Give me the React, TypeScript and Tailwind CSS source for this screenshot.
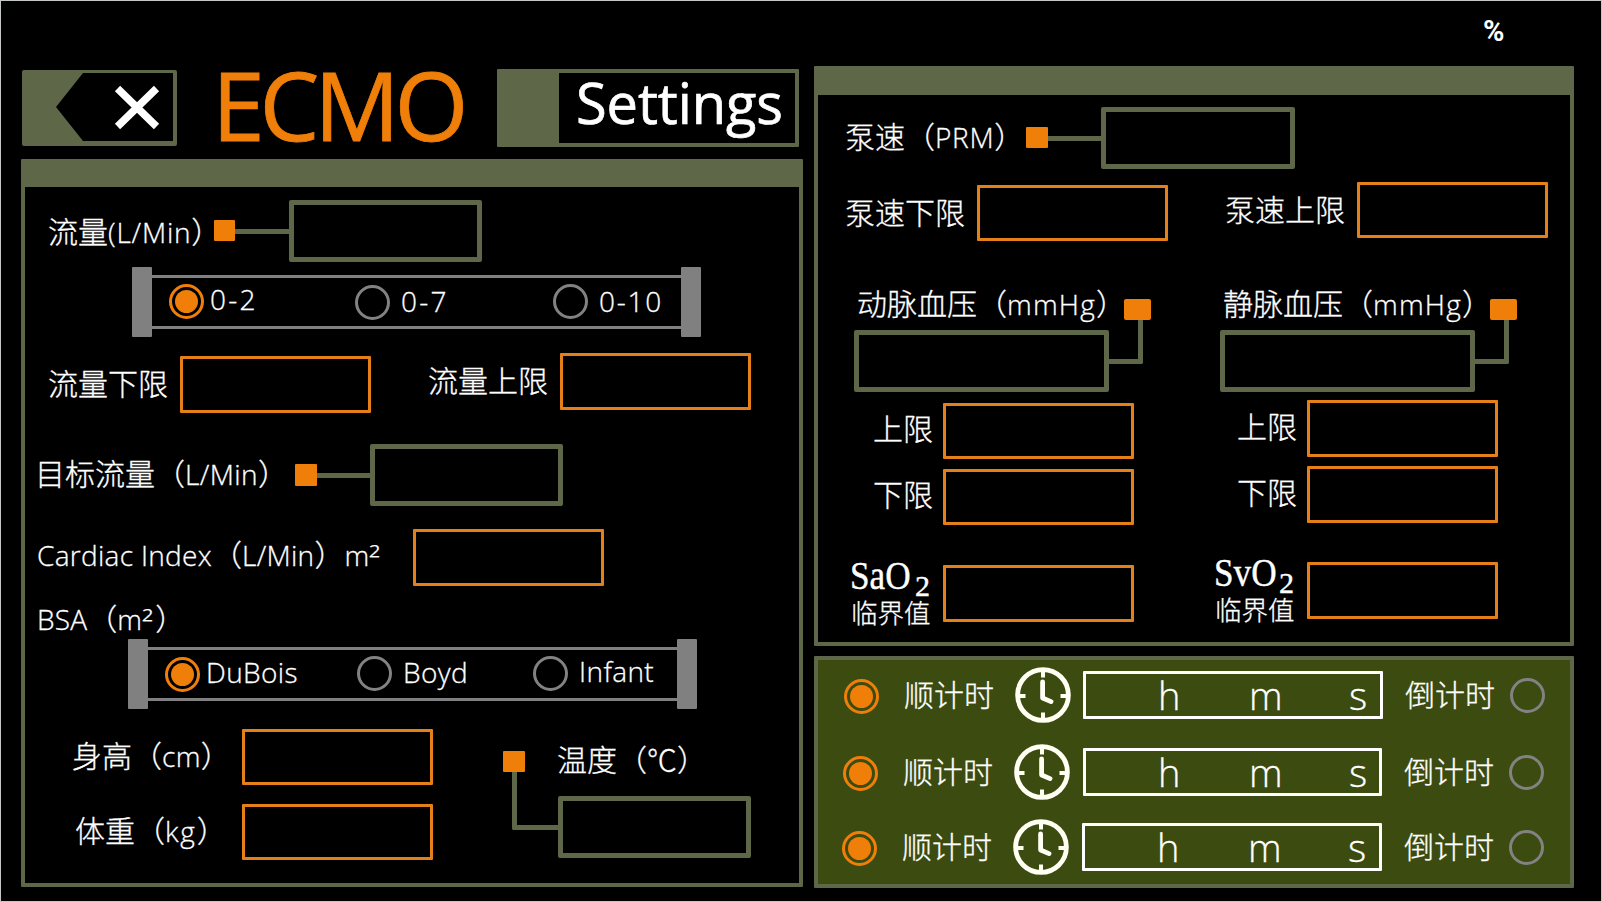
import React from "react";
import clsx from "clsx";

const cjk = "font-['Noto_Sans_CJK_SC','Noto_Sans',sans-serif]";

type TextProps = { text: string; className?: string; latin?: string };

/* Mixed Chinese/Latin caption: Latin runs use a slightly smaller humanist face. */
function Label({ text, className, latin = "text-[28px] tracking-[0.4px]" }: TextProps) {
  const parts = text.split(/(²|[\x21-\x7e][\x20-\x7e]*)/).filter(Boolean);
  return (
    <div
      className={clsx(
        "h-10 shrink-0 text-[30px] leading-10 font-light whitespace-nowrap text-white [-webkit-text-stroke:0.3px_white]",
        cjk,
        className,
      )}
    >
      {parts.map((p, i) => {
        if (p === "²")
          return (
            <span key={i} className="inline-block w-[13px] origin-left translate-y-[3px] scale-x-115 font-['Open_Sans',sans-serif] text-[28px]">
              ²
            </span>
          );
        return /^[\x21-\x7e]/.test(p) ? (
          <span key={i} className={clsx("font-['Open_Sans',sans-serif]", latin)}>
            {p}
          </span>
        ) : (
          p
        );
      })}
    </div>
  );
}

function Input({ className }: { className?: string }) {
  return <div className={clsx("w-[191px] shrink-0 rounded-[1px] border-[3px] border-[#e58019]", className)} />;
}

function Readout({ className }: { className?: string }) {
  return <div className={clsx("h-[62px] shrink-0 rounded-[2px] border-[5px] border-[#5e6849]", className)} />;
}

function Marker({ className }: { className?: string }) {
  return <div className={clsx("shrink-0 rounded-[1px] bg-[#f07f09]", className)} />;
}

function Line({ className }: { className?: string }) {
  return <div className={clsx("h-[5px] shrink-0 bg-[#5e6849]", className)} />;
}

function Radio({ on, className }: { on?: boolean; className?: string }) {
  return (
    <div
      className={clsx(
        "flex size-[35px] shrink-0 items-center justify-center rounded-full border-[3px]",
        on ? "border-[#f07f09]" : "border-[#828282]",
        className,
      )}
    >
      {on && <div className="size-[23px] rounded-full bg-[#f07f09]" />}
    </div>
  );
}

function Range({ className, children }: { className?: string; children: React.ReactNode }) {
  return (
    <div className={clsx("flex h-[70px] items-start", className)}>
      <div className="h-full w-5 rounded-[1px] bg-[#808080]" />
      <div className="mt-2 flex h-[54px] w-[529px] items-start border-y-[3px] border-[#808080]">{children}</div>
      <div className="h-full w-5 rounded-[1px] bg-[#808080]" />
    </div>
  );
}

function Clock() {
  return (
    <svg viewBox="0 0 56 56" className="size-14 shrink-0" fill="none" stroke="#fffff4">
      <circle cx="28" cy="28" r="25.4" strokeWidth="4.8" />
      <path d="M28 2v8.5M28 54v-8.5M2 29h8.5M54 29h-8.5" strokeWidth="4" />
      <path d="M27.6 15v16l8.4 3.6" strokeWidth="4.8" strokeLinecap="round" strokeLinejoin="round" />
    </svg>
  );
}

function Timer({ className, box }: { className?: string; box: string }) {
  return (
    <div className={clsx("flex shrink-0 items-start", className)}>
      <Radio on className="mt-3" />
      <Label text="顺计时" className="mt-[6px] ml-[25px] w-[111px]" />
      <Clock />
      <div className={clsx("mt-1 flex h-12 shrink-0 items-start rounded-[1px] border-[3px] border-white", box)}>
        <Label text="h" latin="text-[38px]" className="mt-px ml-[72px] w-[91px]" />
        <Label text="m" latin="text-[38px]" className="mt-px w-[100px]" />
        <Label text="s" latin="text-[39px]" className="mt-px" />
      </div>
      <Label text="倒计时" className="mt-[6px] ml-[22px] w-[105px]" />
      <Radio className="mt-[11px]" />
    </div>
  );
}

function Pressure({ text, className }: { text: string; className?: string }) {
  return (
    <div className={clsx("shrink-0", className)}>
      <div className="flex h-[38px] items-start">
        <Label text={text} latin="text-[28px] tracking-[1.2px]" className="ml-[3px] w-[267px]" />
        <Marker className="mt-[17px] h-[21px] w-[27px] rounded-[2px]" />
      </div>
      <div className="flex items-start">
        <Readout className="mt-[10px] w-[255px]" />
        <div className="h-[44px] w-[34px] rounded-br-[2px] border-r-[5px] border-b-[5px] border-[#5e6849]" />
      </div>
    </div>
  );
}

function Saturation({ letter, className }: { letter: string; className?: string }) {
  return (
    <div className={clsx("w-[93px] shrink-0", className)}>
      <div className="flex h-[39px] items-start font-['Liberation_Serif',serif] leading-[46px] text-white [-webkit-text-stroke:0.4px_white]">
        <span className="w-[64px] origin-left scale-x-88 text-[40px]">{`S${letter}O`}</span>
        <span className="mt-[10px] ml-px text-[30px]">2</span>
      </div>
      <div className={clsx("ml-px h-10 text-[26.500px] leading-10 font-light whitespace-nowrap text-white [-webkit-text-stroke:0.3px_white]", cjk)}>
        临界值
      </div>
    </div>
  );
}

export default function App() {
  return (
    <div className="flex h-[902px] w-[1602px] items-start overflow-hidden border border-[#c4c8c4] bg-black">
      <div className="ml-5 w-[782px] shrink-0 pt-[68px]">
        <header className="flex h-[78px] items-start">
          <svg viewBox="0 0 155 76" className="mt-px ml-px h-[76px] w-[155px] shrink-0">
            <rect width="155" height="76" rx="2" fill="#5e6849" />
            <path d="M34 37 61 3h90v68H61z" fill="#000" />
            <path d="m95.500 18.500 39 38m0-38-39 38" stroke="#fff" strokeWidth="7.500" />
          </svg>
          <h1 className="-mt-[30px] ml-[35px] w-[285px] font-['Open_Sans',sans-serif] text-[95px] leading-[130px] tracking-[-5.2px] whitespace-nowrap text-[#f07f09] [-webkit-text-stroke:0.8px_#f07f09]">
            ECMO
          </h1>
          <div className="h-[78px] w-[302px] shrink-0 rounded-[1px] border-4 border-l-[62px] border-[#5e6849]">
            <div className="-mt-[11px] ml-[17px] font-['Open_Sans',sans-serif] text-[56px] leading-[80px] tracking-[-0.1px] whitespace-nowrap text-white [-webkit-text-stroke:0.7px_white]">
              Settings
            </div>
          </div>
        </header>

        <section className="mt-3 h-[728px] rounded-[1px] border-4 border-t-[28px] border-[#5e6849]">
          <div className="flex h-20 items-start">
            <Label text="流量(L/Min）" latin="text-[28px] tracking-[0.8px]" className="mt-[23px] ml-[23px] w-[166px]" />
            <Marker className="mt-[33px] size-[21px]" />
            <Line className="mt-[42px] w-[54px]" />
            <Readout className="mt-[13px] w-[193px]" />
          </div>

          <div className="h-[86px]">
            <Range className="ml-[107px]">
              <Radio on className="mt-[6px] ml-[17px]" />
              <Label text="0-2" latin="text-[28px] tracking-[2.3px]" className="-mt-px ml-[6px] w-[145px]" />
              <Radio className="mt-[7px]" />
              <Label text="0-7" latin="text-[28px] tracking-[2.3px]" className="mt-px ml-[11px] w-[152px]" />
              <Radio className="mt-[6px]" />
              <Label text="0-10" latin="text-[28px] tracking-[1.8px]" className="mt-px ml-[11px]" />
            </Range>
          </div>

          <div className="flex h-[91px] items-start">
            <Label text="流量下限" className="mt-[9px] ml-[23px] w-[132px]" />
            <Input className="mt-[3px] h-[57px]" />
            <Label text="流量上限" className="mt-[6px] ml-[57px] w-[132px]" />
            <Input className="h-[57px]" />
          </div>

          <div className="flex h-[85px] items-start">
            <Label text="目标流量（L/Min）" className="mt-[8px] ml-[10px] w-[260px]" />
            <Marker className="mt-5 size-[22px]" />
            <Line className="mt-[29px] w-[53px]" />
            <Readout className="w-[193px]" />
          </div>

          <div className="flex h-[57px] items-start">
            <Label text="Cardiac Index（L/Min）m²" latin="text-[28px] tracking-[0.3px]" className="mt-[4px] ml-[12px] w-[376px]" />
            <Input className="h-[57px]" />
          </div>

          <div className="flex h-[53px] items-start">
            <Label text="BSA（m²）" latin="text-[28px] tracking-[0.2px]" className="mt-[11px] ml-[12px]" />
          </div>

          <div className="h-[90px]">
            <Range className="ml-[103px]">
              <Radio on className="mt-[7px] ml-[17px]" />
              <Label text="DuBois" className="ml-[6px] w-[151px]" />
              <Radio className="mt-[6px]" />
              <Label text="Boyd" className="ml-[11px] w-[130px]" />
              <Radio className="mt-[6px]" />
              <Label text="Infant" className="-mt-px ml-[11px]" />
            </Range>
          </div>

          <div className="flex items-start">
            <div className="ml-[47px] w-[361px] shrink-0">
              <div className="flex h-[75px] items-start">
                <Label text="身高（cm）" className="mt-[5px] w-[170px]" />
                <Input className="h-[56px]" />
              </div>
              <div className="flex items-start">
                <Label text="体重（kg）" latin="text-[28px] tracking-[1.8px]" className="mt-[5px] ml-[3px] w-[167px]" />
                <Input className="h-[56px]" />
              </div>
            </div>
            <div className="mt-[22px] ml-[70px] w-[55px] shrink-0">
              <Marker className="h-[21px] w-[22px]" />
              <div className="ml-[9px] h-[58px] w-[46px] rounded-bl-[2px] border-b-[5px] border-l-[5px] border-[#5e6849]" />
            </div>
            <div className="mt-[9px] shrink-0">
              <Label text="温度（℃）" className="-ml-px" />
              <Readout className="mt-[18px] w-[193px]" />
            </div>
          </div>
        </section>
      </div>

      <div className="ml-[11px] w-[760px] shrink-0">
        <div className="flex h-[65px] items-start pt-[10px] pl-[669px] font-['Roboto',sans-serif] text-[29px] leading-10 font-bold text-white">%</div>

        <section className="h-[580px] rounded-[1px] border-4 border-t-[29px] border-[#5e6849]">
          <div className="flex h-[87px] items-start">
            <Label text="泵速（PRM）" latin="text-[28px] tracking-[0.7px]" className="mt-5 ml-[27px] w-[181px]" />
            <Marker className="mt-8 h-[21px] w-[22px]" />
            <Line className="mt-[41px] w-[53px]" />
            <Readout className="mt-3 w-[194px]" />
          </div>

          <div className="flex h-[100px] items-start">
            <Label text="泵速下限" className="mt-[9px] ml-[27px] w-[132px]" />
            <Input className="mt-[3px] h-[56px]" />
            <Label text="泵速上限" className="mt-[6px] ml-[57px] w-[132px]" />
            <Input className="h-[56px]" />
          </div>

          <div className="flex h-[118px] items-start">
            <Pressure text="动脉血压（mmHg）" className="ml-9" />
            <Pressure text="静脉血压（mmHg）" className="ml-[69px]" />
          </div>

          <div className="flex h-[66px] items-start">
            <Label text="上限" className="mt-[7px] ml-[55px] w-[70px]" />
            <Input className="mt-[3px] h-[56px]" />
            <Label text="上限" className="mt-[5px] ml-[103px] w-[70px]" />
            <Input className="h-[57px]" />
          </div>

          <div className="flex h-[96px] items-start">
            <Label text="下限" className="mt-[7px] ml-[55px] w-[70px]" />
            <Input className="mt-[3px] h-[56px]" />
            <Label text="下限" className="mt-[5px] ml-[103px] w-[70px]" />
            <Input className="h-[57px]" />
          </div>

          <div className="flex items-start">
            <Saturation letter="a" className="-mt-[9px] ml-8" />
            <Input className="mt-[3px] h-[57px]" />
            <Saturation letter="v" className="-mt-3 ml-20" />
            <Input className="h-[57px]" />
          </div>
        </section>

        <section className="mt-[10px] h-[232px] rounded-[1px] border-4 border-[#5e6849] bg-[#3c4b10] pt-[7px]">
          <Timer className="ml-[26px] h-[77px]" box="ml-3 w-[300px]" />
          <Timer className="ml-[25px] h-[75px]" box="ml-[13px] w-[299px]" />
          <Timer className="ml-[24px]" box="ml-[13px] w-[300px]" />
        </section>
      </div>
    </div>
  );
}
